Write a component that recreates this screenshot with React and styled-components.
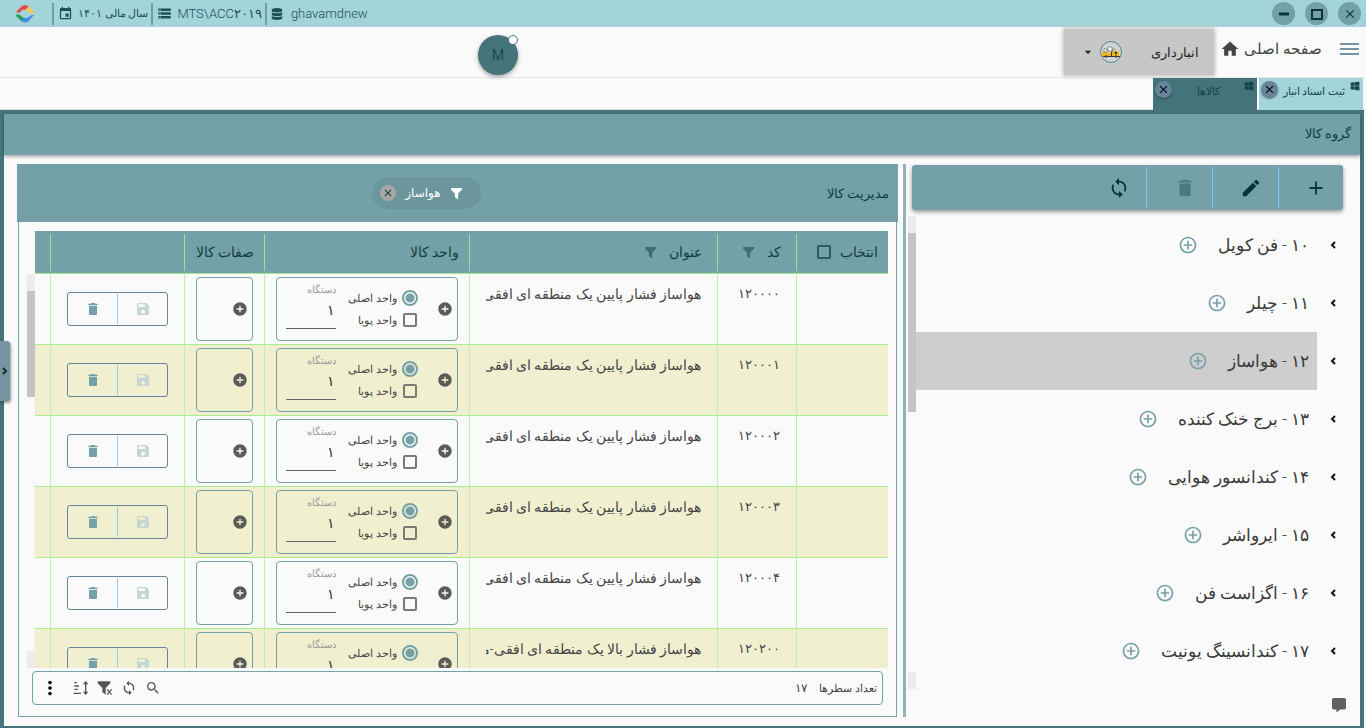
import React, { useState } from "react";
import styled, { createGlobalStyle } from "styled-components";
import {
    MdEvent,
    MdStorage,
    MdClose,
    MdHome,
    MdAdd,
    MdAddCircle,
    MdAddCircleOutline,
    MdEdit,
    MdDelete,
    MdSync,
    MdSave,
    MdSearch,
    MdMoreVert,
    MdArrowDropDown,
} from "react-icons/md";
import { FaDatabase, FaWindows, FaCommentAlt } from "react-icons/fa";

const GlobalStyle = createGlobalStyle`
* {
    box-sizing: border-box;
}

body {
    margin: 0;
    background: #fafafa;
    color: #444;
    font-family: Roboto, "DejaVu Sans", sans-serif;
    font-size: 14px;
    font-weight: 300;
}

button, input {
    font: inherit;
    color: inherit;
}

button {
    display: flex;
    align-items: center;
    justify-content: center;
    padding: 0;
    border: 0;
    background: none;
    cursor: pointer;
}

svg {
    flex: none;
}
`;

const Page = styled.div`
display: flex;
flex-direction: column;
height: 100vh;
overflow: hidden;
position: relative;
`;

const TitleBar = styled.header`
display: flex;
align-items: center;
justify-content: space-between;
flex: none;
height: 27px;
padding: 0 5px 0 16px;
background: #a3d4da;
color: #1c4f52;
`;

const TitleInfo = styled.div`
display: flex;
align-items: center;
`;

const LogoBox = styled.div`
display: flex;
width: 36px;
`;

const InfoItem = styled.div`
display: flex;
align-items: center;
gap: ${(p) => p.$gap || 5}px;
height: 22px;
padding: 0 3px 0 4px;
border-left: 2px solid #6d9fa5;
font-size: ${(p) => (p.$small ? 11 : 13)}px;
white-space: nowrap;
`;

const WindowButtons = styled.div`
display: flex;
gap: 10px;
`;

const RoundButton = styled.button`
width: 23px;
height: 23px;
border-radius: 50%;
background: #74a1a7;
color: #0d3436;
`;

const NavBar = styled.nav`
display: flex;
align-items: center;
flex: none;
height: 51px;
padding: 0 7px;
border-bottom: 1px solid #e6e6e6;
direction: rtl;
`;

const MenuButton = styled.button`
flex-direction: column;
gap: 3px;
width: 19px;
margin-left: 18px;
margin-top: -6px;

span {
    width: 19px;
    height: 2px;
    background: #7294a3;
}
`;

const HomeLink = styled.a`
display: flex;
align-items: center;
gap: 4px;
margin-top: -6px;
color: #444;
font-size: 15px;
text-decoration: none;
white-space: nowrap;
`;

const ModuleButton = styled.button`
width: 150px;
height: 46px;
margin-right: 6px;
justify-content: flex-start;
padding-right: 15px;
background: #c7c7c7;
box-shadow: 0 0 4px 1px #bdbdbd;
color: #222;
font-size: 13px;

svg {
    margin-right: 28px;
}

svg + svg {
    margin-right: 3px;
}
`;

const Profile = styled.button`
position: relative;
width: 40px;
height: 40px;
margin-top: 6px;
margin-right: auto;
margin-left: 471px;
border-radius: 50%;
background: #44737a;
box-shadow: 0 2px 4px rgba(0,0,0,0.35);
color: #0d3436;
`;

const Badge = styled.span`
position: absolute;
top: 0;
right: 0;
width: 10px;
height: 10px;
border: 1px solid #44737a;
border-radius: 50%;
background: #fff;
`;

const TabStrip = styled.div`
display: flex;
flex: none;
gap: 2px;
height: 32px;
padding-right: 3px;
border-bottom: 1px solid #e0e0e0;
direction: rtl;
`;

const Tab = styled.div`
display: flex;
justify-content: space-between;
width: 104px;
height: 32px;
padding: 3px 3px 0 2px;
background: ${(p) => (p.$active ? "#44737a" : "#a3d4da")};
color: #174447;

a {
    color: inherit;
    font-size: 11px;
    line-height: 22px;
    text-decoration: none;
    white-space: nowrap;
}
`;

const TabClose = styled.button`
width: 17px;
height: 17px;
border-radius: 50%;
background: #67859a;
box-shadow: 0 1px 2px rgba(0,0,0,0.4);
color: #000;
`;

const Frame = styled.main`
display: flex;
flex-direction: column;
flex: 1;
min-height: 0;
margin-right: 2px;
border: 4px solid #44737a;
border-bottom-width: 2px;
direction: rtl;
`;

const FrameTitle = styled.h1`
flex: none;
height: 41px;
margin: 0;
padding-right: 9px;
background: #74a1a7;
box-shadow: 0 2px 3px rgba(0,0,0,0.3);
color: #123e40;
font-size: 13px;
font-weight: 300;
line-height: 40px;
`;

const Split = styled.div`
display: flex;
flex: 1;
min-height: 0;
padding: 9px 0;
`;

const Splitter = styled.div`
flex: none;
width: 3px;
background: #94b1b5;
`;

const TreePanel = styled.section`
display: flex;
flex-direction: column;
flex: 454 1 0;
min-width: 0;
padding: 1px 0 0;
`;

const Toolbar = styled.div`
display: flex;
align-items: center;
flex: none;
height: 45px;
margin: 0 17px 6px 6px;
border-radius: 3px;
background: #74a1a7;
box-shadow: 0 2px 4px rgba(0,0,0,0.4);
color: #0a3335;
`;

const ToolButton = styled.button`
width: ${(p) => (p.$first ? 64 : 66)}px;
height: 41px;
padding-left: 10px;
border-right: ${(p) => (p.$first ? "0" : "1px solid #78cbf5")};

&:disabled {
    color: #4a7b80;
}
`;

const TreeArea = styled.div`
display: flex;
flex: none;
height: 473px;
padding-left: 2px;
`;

const TreeList = styled.ul`
flex: 1;
margin: 0;
padding: 0;
overflow: hidden;
list-style: none;
`;

const TreeItem = styled.li`
display: flex;
align-items: center;
height: 58px;
padding-right: 22px;

& > button {
    width: 10px;
    margin-left: 11px;
    color: #111;
}
`;

const TreeLabel = styled.div`
display: flex;
align-items: center;
flex: 1;
gap: 20px;
height: 58px;
padding-right: 8px;
background: ${(p) => (p.$selected ? "#cecece" : "none")};
color: #3a3a3a;
font-size: 17px;
line-height: 24px;
white-space: nowrap;

button {
    color: #74a1a7;
}
`;

const ScrollTrack = styled.div`
display: flex;
flex-direction: column;
flex: none;
width: 8px;

&::before, &::after {
    content: "";
    flex: none;
    height: 17px;
    background: #ececec;
}

&::after {
    margin-top: auto;
}
`;

const ScrollThumb = styled.div`
height: ${(p) => p.$size}px;
background: #c4c4c4;
`;

const GridPanel = styled.section`
display: flex;
flex-direction: column;
flex: 881 1 0;
min-width: 0;
padding: 0 5px 0 13px;
`;

const GridHeader = styled.div`
display: flex;
align-items: center;
flex: none;
height: 58px;
padding: 0 9px;
background: #74a1a7;
color: #123e40;

h2 {
    margin: 0;
    font-size: 13px;
    font-weight: 300;
}
`;

const Chip = styled.div`
display: flex;
align-items: center;
gap: 9px;
height: 32px;
margin: 0 auto;
padding: 0 18px 0 8px;
border-radius: 16px;
background: #6b969c;
color: #fff;
font-size: 12px;
font-weight: 400;

button {
    width: 16px;
    height: 16px;
    border-radius: 50%;
    background: #a6a6a6;
    color: #123e40;
}
`;

const GridBody = styled.div`
display: flex;
flex-direction: column;
flex: 1;
min-height: 0;
margin: 0 1px;
padding: 9px 8px 11px;
border: 1px solid #74a1a7;
border-top: 0;
`;

const TableArea = styled.div`
display: flex;
flex: 1;
min-height: 0;
overflow: hidden;

${ScrollTrack} {
    margin-top: 43px;
}
`;

const Table = styled.table`
flex: 1;
width: 100%;
height: fit-content;
border-collapse: separate;
border-spacing: 0;
table-layout: fixed;
`;

const HeadCell = styled.th`
height: 43px;
padding: 0 10px;
border-bottom: 1px solid #a5e88f;
background: linear-gradient(#a5dba0, #a5dba0) no-repeat left center / ${(p) => (p.$last ? 0 : 1)}px 37px #74a1a7;
color: #123e40;
font-size: 14px;
font-weight: 300;
text-align: right;
white-space: nowrap;
`;

const HeadContent = styled.div`
display: flex;
align-items: center;
gap: ${(p) => p.$gap}px;
padding-right: ${(p) => p.$inset || 0}px;

svg {
    color: #416e75;
}
`;

const Row = styled.tr`
background: ${(p) => (p.$odd ? "#f0f0d0" : "#fafafa")};
`;

const Cell = styled.td`
height: 71px;
padding: 3px 11px;
border-bottom: 1px solid #a9ec8e;
border-left: ${(p) => (p.$last ? "0" : "1px solid #bdf0a8")};
vertical-align: middle;
`;

const TextCell = styled(Cell)`
padding: 9px 16px;
vertical-align: top;

div {
    overflow: hidden;
    font-size: ${(p) => (p.$wide ? 14 : 13)}px;
    line-height: 22px;
    white-space: nowrap;
}
`;

const UnitBox = styled.div`
display: flex;
align-items: center;
height: 64px;
padding: 0 4px 0 9px;
border: 1px solid #74a1a7;
border-radius: 4px;
`;

const AddButton = styled.button`
color: #5a5a56;
`;

const Options = styled.div`
display: flex;
flex-direction: column;
gap: 4px;
margin-right: 19px;
`;

const Option = styled.label`
display: flex;
align-items: center;
gap: 5px;
height: 18px;
font-size: 11px;
white-space: nowrap;
`;

const CheckBox = styled.input`
appearance: none;
width: 14px;
height: 14px;
margin: 0 1px;
border: 2px solid ${(p) => p.$color || "#7a7a74"};
border-radius: 2px;
`;

const Radio = styled.input`
appearance: none;
width: 16px;
height: 16px;
margin: 0;
border: 2px solid #74a1a7;
border-radius: 50%;

&:checked {
    background: radial-gradient(circle, #74a1a7 4px, transparent 5px);
}
`;

const Field = styled.label`
display: flex;
flex-direction: column;
align-self: flex-start;
width: 50px;
margin-top: 4px;
margin-right: auto;
color: #999;
font-size: 10px;
line-height: 16px;

input {
    width: 100%;
    height: 31px;
    padding: 0 1px 6px;
    border: 0;
    border-bottom: 1px solid #666;
    border-radius: 0;
    background: none;
    color: #333;
    font-size: 14px;
}
`;

const Actions = styled.div`
display: flex;
height: 34px;
margin: 0 5px;
border: 1px solid #67859a;
border-radius: 3px;
color: #74a1a7;

button {
    flex: 1;
    margin: 1px 0;
}

button + button {
    border-right: 1px solid #8fd0f2;
}

button:disabled {
    color: #c4d7d5;
}
`;

const GridFooter = styled.footer`
display: flex;
align-items: center;
flex: none;
height: 34px;
margin: 3px 5px 0;
padding: 0 5px 0 8px;
border: 1px solid #74a1a7;
border-radius: 4px;
font-size: 11px;
`;

const RowTotal = styled.output`
margin-right: 12px;
font-size: 12px;
`;

const FooterTools = styled.div`
display: flex;
align-items: center;
gap: 8px;
margin-right: auto;
color: #555;
`;

const MoreButton = styled.button`
margin-right: 6px;
width: 18px;
color: #111;
`;

const ChatButton = styled.button`
position: absolute;
right: 20px;
bottom: 16px;
color: #616161;
`;

const Drawer = styled.button`
position: absolute;
left: 0;
top: 341px;
width: 10px;
height: 60px;
border-radius: 0 3px 3px 0;
background: #7893a0;
box-shadow: 1px 2px 3px rgba(0,0,0,0.4);
color: #0d3436;
`;

const groups = [
    { code: "۱۰", title: "فن کویل" },
    { code: "۱۱", title: "چیلر" },
    { code: "۱۲", title: "هواساز" },
    { code: "۱۳", title: "برج خنک کننده" },
    { code: "۱۴", title: "کندانسور هوایی" },
    { code: "۱۵", title: "ایرواشر" },
    { code: "۱۶", title: "اگزاست فن" },
    { code: "۱۷", title: "کندانسینگ یونیت" },
];

const goods = [
    { code: "۱۲۰۰۰۰", title: "هواساز فشار پایین یک منطقه ای افقی" },
    { code: "۱۲۰۰۰۱", title: "هواساز فشار پایین یک منطقه ای افقی" },
    { code: "۱۲۰۰۰۲", title: "هواساز فشار پایین یک منطقه ای افقی" },
    { code: "۱۲۰۰۰۳", title: "هواساز فشار پایین یک منطقه ای افقی" },
    { code: "۱۲۰۰۰۴", title: "هواساز فشار پایین یک منطقه ای افقی" },
    { code: "۱۲۰۲۰۰", title: "هواساز فشار بالا یک منطقه ای افقی-مدل" },
];

const Logo = () => (
    <svg width="18" height="18" viewBox="0 0 18 18">
        <path d="M0 7 5.500 1.500Q9-1 12.500 1.500L10 4.500H7L3 8Z" fill="#e0493e" />
        <path d="M12.500 1.500 18 7l-1 1.500h-2.500L10 4.500Z" fill="#f7c748" />
        <path d="M18 10l-5.500 6Q9 19 5.500 16l2.500-3h3.500l4-3Z" fill="#4687f0" />
        <path d="M0 9.500h3L8 13l-2.500 3.500L0 11Z" fill="#2a9c5b" />
    </svg>
);

const Funnel = () => (
    <svg width="13" height="13" viewBox="0 0 24 24" fill="currentColor">
        <path d="M2 2h20v3l-7 7v11l-6-4v-7L2 5Z" />
    </svg>
);

const FunnelClear = () => (
    <svg width="16" height="16" viewBox="0 0 24 24" fill="currentColor">
        <path d="M1 2h19v3l-7 7v10l-5-4v-6L1 5Z" />
        <path d="m15 14 7 8m0-8-7 8" stroke="currentColor" strokeWidth="2" />
    </svg>
);

const SortIcon = () => (
    <svg width="16" height="16" viewBox="0 0 24 24" fill="none" stroke="currentColor" strokeWidth="2">
        <path d="M2 4h4M2 9h7M2 14h5M1 20h11M19 5v14" />
        <path d="m16 6 3-4 3 4zM16 18l3 4 3-4z" fill="currentColor" strokeWidth="1" />
    </svg>
);

const Chevron = ({ left }) => (
    <svg width="6" height="8" viewBox="0 0 6 8" fill="none" stroke="currentColor" strokeWidth="2">
        <path d={left ? "M5 1 2 4l3 3" : "m1 1 3 3-3 3"} />
    </svg>
);

const TruckIcon = () => (
    <svg width="24" height="24" viewBox="0 0 24 24">
        <circle cx="12" cy="12" r="10.500" fill="#d0d4d4" stroke="#55858b" strokeWidth="1" />
        <path d="M3 16v-3l2-2h3l1 2h3V9h3l1 2h4v5Z" fill="#f5b50f" />
        <path d="M5 9h3v3H5zM9 7h4v4H9zM14 9h2v3h-2z" fill="#fff" stroke="#555" strokeWidth=".6" />
        <path d="M4 16h17v1H4zM12 12h1v4h-1zM16 12h2v2h-2z" fill="#333" />
        <circle cx="7" cy="16.500" r="1.300" fill="#444" />
        <circle cx="17" cy="16.500" r="1.300" fill="#444" />
    </svg>
);

function GoodsRow({ item, odd }) {
    const [unit, setUnit] = useState("main");

    return (
        <Row $odd={odd}>
            <Cell />
            <TextCell>
                <div>{item.code}</div>
            </TextCell>
            <TextCell $wide>
                <div>{item.title}</div>
            </TextCell>
            <Cell>
                <UnitBox>
                    <AddButton aria-label="افزودن واحد"><MdAddCircle size={16} /></AddButton>
                    <Options>
                        <Option>
                            <Radio type="radio" checked={unit === "main"} onChange={() => setUnit("main")} />
                            واحد اصلی
                        </Option>
                        <Option>
                            <CheckBox type="checkbox" />
                            واحد پویا
                        </Option>
                    </Options>
                    <Field>
                        دستگاه
                        <input defaultValue="۱" />
                    </Field>
                </UnitBox>
            </Cell>
            <Cell>
                <UnitBox>
                    <AddButton aria-label="افزودن صفت"><MdAddCircle size={16} /></AddButton>
                </UnitBox>
            </Cell>
            <Cell>
                <Actions>
                    <button disabled aria-label="ذخیره"><MdSave size={16} /></button>
                    <button aria-label="حذف"><MdDelete size={16} /></button>
                </Actions>
            </Cell>
            <Cell $last />
        </Row>
    );
}

export default function App() {
    const [selected, setSelected] = useState("۱۲");

    return (
        <Page>
            <GlobalStyle />
            <TitleBar>
                <TitleInfo>
                    <LogoBox><Logo /></LogoBox>
                    <InfoItem $small>
                        <MdEvent size={15} />
                        <span dir="rtl">سال مالی ۱۴۰۱</span>
                    </InfoItem>
                    <InfoItem>
                        <MdStorage size={15} />
                        MTS\ACC۲۰۱۹
                    </InfoItem>
                    <InfoItem $gap={8}>
                        <FaDatabase size={12} />
                        ghavamdnew
                    </InfoItem>
                </TitleInfo>
                <WindowButtons>
                    <RoundButton aria-label="کوچک کردن">
                        <svg width="12" height="12" viewBox="0 0 12 12"><path d="M1 6h10" stroke="currentColor" strokeWidth="3" /></svg>
                    </RoundButton>
                    <RoundButton aria-label="بزرگ کردن">
                        <svg width="12" height="12" viewBox="0 0 12 12"><path d="M1 2h10v9H1z" fill="none" stroke="currentColor" strokeWidth="2" /></svg>
                    </RoundButton>
                    <RoundButton aria-label="بستن"><MdClose size={14} /></RoundButton>
                </WindowButtons>
            </TitleBar>

            <NavBar>
                <MenuButton aria-label="منو"><span /><span /><span /></MenuButton>
                <HomeLink href="#home">
                    صفحه اصلی
                    <MdHome size={20} />
                </HomeLink>
                <ModuleButton>
                    انبارداری
                    <TruckIcon />
                    <MdArrowDropDown size={16} />
                </ModuleButton>
                <Profile>
                    M
                    <Badge />
                </Profile>
            </NavBar>

            <TabStrip>
                <Tab>
                    <FaWindows size={10} />
                    <a href="#docs">ثبت اسناد انبار</a>
                    <TabClose aria-label="بستن"><MdClose size={13} /></TabClose>
                </Tab>
                <Tab $active>
                    <FaWindows size={10} />
                    <a href="#goods">کالاها</a>
                    <TabClose aria-label="بستن"><MdClose size={13} /></TabClose>
                </Tab>
            </TabStrip>

            <Frame>
                <FrameTitle>گروه کالا</FrameTitle>
                <Split>
                    <TreePanel>
                        <Toolbar>
                            <ToolButton $first aria-label="افزودن"><MdAdd size={22} /></ToolButton>
                            <ToolButton aria-label="ویرایش"><MdEdit size={22} /></ToolButton>
                            <ToolButton disabled aria-label="حذف"><MdDelete size={22} /></ToolButton>
                            <ToolButton aria-label="بازخوانی"><MdSync size={22} /></ToolButton>
                        </Toolbar>
                        <TreeArea>
                            <TreeList>
                                {groups.map((g) => (
                                    <TreeItem key={g.code}>
                                        <button aria-label="باز کردن"><Chevron left /></button>
                                        <TreeLabel $selected={g.code === selected} onClick={() => setSelected(g.code)}>
                                            {g.code} - {g.title}
                                            <button aria-label="افزودن"><MdAddCircleOutline size={20} /></button>
                                        </TreeLabel>
                                    </TreeItem>
                                ))}
                            </TreeList>
                            <ScrollTrack><ScrollThumb $size={179} /></ScrollTrack>
                        </TreeArea>
                    </TreePanel>

                    <Splitter />

                    <GridPanel>
                        <GridHeader>
                            <h2>مدیریت کالا</h2>
                            <Chip>
                                <Funnel />
                                هواساز
                                <button aria-label="حذف فیلتر"><MdClose size={12} /></button>
                            </Chip>
                        </GridHeader>
                        <GridBody>
                            <TableArea>
                                <Table>
                                    <colgroup>
                                        <col width="92" />
                                        <col width="79" />
                                        <col />
                                        <col width="205" />
                                        <col width="80" />
                                        <col width="134" />
                                        <col width="15" />
                                    </colgroup>
                                    <thead>
                                        <tr>
                                            <HeadCell>
                                                <HeadContent as="label" $gap={8}>
                                                    انتخاب
                                                    <CheckBox type="checkbox" $color="#2f5a60" />
                                                </HeadContent>
                                            </HeadCell>
                                            <HeadCell><HeadContent $gap={12} $inset={5}>کد<Funnel /></HeadContent></HeadCell>
                                            <HeadCell><HeadContent $gap={12} $inset={5}>عنوان<Funnel /></HeadContent></HeadCell>
                                            <HeadCell>واحد کالا</HeadCell>
                                            <HeadCell>صفات کالا</HeadCell>
                                            <HeadCell />
                                            <HeadCell $last />
                                        </tr>
                                    </thead>
                                    <tbody>
                                        {goods.map((item, i) => (
                                            <GoodsRow key={item.code} item={item} odd={i % 2 === 1} />
                                        ))}
                                    </tbody>
                                </Table>
                                <ScrollTrack><ScrollThumb $size={106} /></ScrollTrack>
                            </TableArea>
                            <GridFooter>
                                تعداد سطرها
                                <RowTotal>۱۷</RowTotal>
                                <FooterTools>
                                    <button aria-label="جستجو"><MdSearch size={16} /></button>
                                    <button aria-label="بازخوانی"><MdSync size={16} /></button>
                                    <button aria-label="حذف فیلترها"><FunnelClear /></button>
                                    <button aria-label="مرتب سازی"><SortIcon /></button>
                                    <MoreButton aria-label="بیشتر"><MdMoreVert size={22} /></MoreButton>
                                </FooterTools>
                            </GridFooter>
                        </GridBody>
                    </GridPanel>
                </Split>
            </Frame>
            <ChatButton aria-label="گفتگو"><FaCommentAlt size={14} /></ChatButton>
            <Drawer aria-label="باز کردن منو"><Chevron /></Drawer>
        </Page>
    );
}
